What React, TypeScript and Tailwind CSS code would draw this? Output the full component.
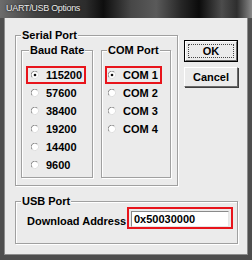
import React from "react";

const Radio: React.FC<{ checked?: boolean }> = ({ checked }) => (
    <svg width="8" height="8" viewBox="0 0 8 8" className="shrink-0">
        <circle cx="4" cy="4" r="3.5" fill="#ffffff" />
        <path d="M1.2 6.5 A3.5 3.5 0 0 1 6.5 1.2" fill="none" stroke="#8a8a8a" strokeWidth="1" />
        <path d="M6.5 1.2 A3.5 3.5 0 0 1 1.2 6.5" fill="none" stroke="#dedede" strokeWidth="1" />
        {checked && <circle cx="4" cy="4" r="1.3" fill="#111111" />}
    </svg>
);

const RadioRow: React.FC<{ label: string; checked?: boolean; pad: string }> = ({ label, checked, pad }) => (
    <div
        className={`flex h-[18px] items-center gap-[7px] border-2 pr-[2px] ${pad} ${
            checked ? "border-[#e8141b]" : "border-transparent"
        }`}
    >
        <Radio checked={checked} />
        <span className="leading-[14px]">{label}</span>
    </div>
);

const GroupBox: React.FC<{
    title: string;
    titleLeft: string;
    className: string;
    children: React.ReactNode;
}> = ({ title, titleLeft, className, children }) => (
    <div
        className={`relative border border-[#a0a0a0] shadow-[inset_1px_1px_0_#ffffff,1px_1px_0_#ffffff] ${className}`}
    >
        <span className={`absolute top-[-8px] ${titleLeft} bg-[#ebebeb] px-[1px] leading-[14px]`}>{title}</span>
        {children}
    </div>
);

const baudRates = ["115200", "57600", "38400", "19200", "14400", "9600"];
const comPorts = ["COM 1", "COM 2", "COM 3", "COM 4"];

export default function App() {
    return (
        <div className="flex h-[260px] w-[252px] flex-col bg-[#4e4e4e] font-['Liberation_Sans',Arial,sans-serif] text-[11px] font-bold text-black">
            <div className="flex h-[18px] items-center bg-[linear-gradient(90deg,#6c6c6c_0%,#424242_14%,#2c2c2c_34%,#0e0e0e_41%,#474747_52%,#5a5a5a_62%,#262626_72%,#0b0b0b_79%,#4c4c4c_88%,#2e2e2e_94%,#8a8a8a_100%)] pl-[6px]">
                <span className="text-[9px] font-normal tracking-[-0.3px] text-[#ececec] [text-shadow:0_0_2px_#000]">
                    UART/USB Options
                </span>
            </div>
            <div className="mx-[4px] flex h-[237px] flex-col bg-[#ebebeb] pl-[11px] shadow-[inset_1px_0_0_#8c8c8c,inset_-1px_0_0_#8c8c8c,inset_0_-1px_0_#8c8c8c]">
                <div className="mt-[17px] flex items-start">
                    <GroupBox title="Serial Port" titleLeft="left-[5px]" className="flex w-[163px] pb-[7px] pl-[5px] pt-[14px]">
                        <GroupBox title="Baud Rate" titleLeft="left-[7px]" className="h-[128px] w-[72px] pl-[4px] pt-[15px]">
                            {baudRates.map((b, i) => (
                                <div key={b} className="flex">
                                    <RadioRow label={b} checked={i === 0} pad="pl-[3px]" />
                                </div>
                            ))}
                        </GroupBox>
                        <GroupBox title="COM Port" titleLeft="left-[5px]" className="ml-[8px] h-[128px] w-[70px] pl-[3px] pt-[15px]">
                            {comPorts.map((c, i) => (
                                <div key={c} className="flex">
                                    <RadioRow label={c} checked={i === 0} pad="pl-[1px]" />
                                </div>
                            ))}
                        </GroupBox>
                    </GroupBox>
                    <div className="ml-[6px] mt-[5px] flex w-[54px] flex-col">
                        <button className="h-[22px] border border-black bg-[#ebebeb] p-0 text-[11px] font-bold">
                            <div className="flex h-full items-center justify-center border border-b-[#6a6a6a] border-l-white border-r-[#6a6a6a] border-t-white p-[2px]">
                                <div className="flex h-full w-full items-center justify-center border border-dotted border-[#444]">
                                    OK
                                </div>
                            </div>
                        </button>
                        <button className="mt-[5px] flex h-[20px] items-center justify-center border border-b-[#6a6a6a] border-l-white border-r-[#6a6a6a] border-t-white bg-[#ebebeb] text-[11px] font-bold shadow-[1px_1px_0_#404040]">
                            Cancel
                        </button>
                    </div>
                </div>
                <GroupBox title="USB Port" titleLeft="left-[5px]" className="mt-[15px] flex w-[223px] items-start pb-[14px] pl-[11px] pt-[5px]">
                    <span className="mt-[7px] w-[100px] leading-[14px]">Download Address</span>
                    <div className="flex h-[22px] w-[106px] border-2 border-[#e8141b] px-[2px] pt-[2px]">
                        <div className="flex h-[16px] w-[98px] items-center border border-b-[#e6e6e6] border-l-[#8a8a8a] border-r-[#e6e6e6] border-t-[#8a8a8a] bg-white pl-[2px]">
                            0x50030000
                        </div>
                    </div>
                </GroupBox>
            </div>
        </div>
    );
}
